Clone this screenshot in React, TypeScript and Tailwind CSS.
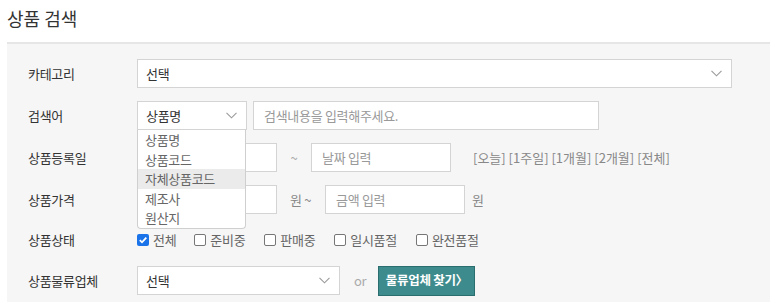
import React from "react";

const Chevron = ({ className = "" }: { className?: string }) => (
  <svg width="11" height="7" viewBox="0 0 11 7" className={className}>
    <path d="M0.5 0.8 L5.5 5.8 L10.5 0.8" fill="none" stroke="#9a9a9a" strokeWidth="1.1" />
  </svg>
);

const Select = ({ value, width }: { value: string; width: string }) => (
  <div className={`${width} h-[29px] bg-white border border-[#d4d4d4] flex items-center justify-between pl-[8px] pr-[9px] text-[#333]`}>
    <span>{value}</span>
    <Chevron />
  </div>
);

const Input = ({ placeholder, width }: { placeholder?: string; width: string }) => (
  <div className={`${width} h-[29px] bg-white border border-[#d4d4d4] flex items-center pl-[10px] text-[#999]`}>
    {placeholder}
  </div>
);

const Row = ({ label, children, h = "h-[29px]" }: { label: string; children: React.ReactNode; h?: string }) => (
  <div className={`flex items-center ${h}`}>
    <div className="w-[109px] text-[#333] shrink-0">{label}</div>
    <div className="flex items-center">{children}</div>
  </div>
);

const Check = ({ checked, label, ml }: { checked?: boolean; label: string; ml?: string }) => (
  <div className={`flex items-center ${ml ?? ""}`}>
    {checked ? (
      <div className="w-[12px] h-[12px] rounded-[2px] bg-[#1a73e8] flex items-center justify-center">
        <svg width="10" height="10" viewBox="0 0 10 10">
          <path d="M1.8 5.2 L4 7.3 L8.3 2.6" fill="none" stroke="white" strokeWidth="1.8" />
        </svg>
      </div>
    ) : (
      <div className="w-[12px] h-[12px] rounded-[2px] border border-[#767676] bg-white" />
    )}
    <span className="ml-[4px] text-[#666]">{label}</span>
  </div>
);

export default function App() {
  return (
    <div
      className="w-[777px] h-[305px] bg-white px-[7px] text-[13px] tracking-[-0.3px] overflow-hidden"
      style={{ fontFamily: '"Noto Sans CJK KR", "Noto Sans", sans-serif' }}
    >
      <div className="h-[42px] flex items-start pt-[5px] text-[18px] text-[#333] tracking-[0px]">상품 검색</div>
      <div className="bg-[#f6f6f6] border-t-[2px] border-[#e6e6e6] h-[260px] pl-[21px] pt-[15px] flex flex-col gap-[13px]">
        <Row label="카테고리">
          <Select value="선택" width="w-[595px]" />
        </Row>
        <Row label="검색어">
          <div className="relative">
            <Select value="상품명" width="w-[110px]" />
            <div className="absolute left-0 top-[29px] w-[109px] z-10 bg-white border border-t-0 border-[#cfcfcf] rounded-b-[4px] text-[#666] py-0">
              {["상품명", "상품코드", "자체상품코드", "제조사", "원산지"].map((t, i) => (
                <div key={t} className={`h-[19.6px] flex items-center pl-[7px] ${i === 2 ? "bg-[#ebebeb]" : ""}`}>
                  {t}
                </div>
              ))}
            </div>
          </div>
          <div className="ml-[6px]">
            <Input placeholder="검색내용을 입력해주세요." width="w-[346px]" />
          </div>
        </Row>
        <Row label="상품등록일">
          <Input width="w-[140px]" />
          <span className="w-[34px] text-center text-[#aaa]">~</span>
          <Input placeholder="날짜 입력" width="w-[140px]" />
          <span className="ml-[22px] text-[#888] tracking-[0px]">[오늘] [1주일] [1개월] [2개월] [전체]</span>
        </Row>
        <Row label="상품가격">
          <Input width="w-[140px]" />
          <span className="ml-[13px] w-[35px] text-[#888]">원 ~</span>
          <Input placeholder="금액 입력" width="w-[140px]" />
          <span className="ml-[7px] text-[#888]">원</span>
        </Row>
        <Row label="상품상태" h="h-[26px]">
          <Check checked label="전체" />
          <Check label="준비중" ml="ml-[18px]" />
          <Check label="판매중" ml="ml-[19px]" />
          <Check label="일시품절" ml="ml-[19px]" />
          <Check label="완전품절" ml="ml-[19px]" />
        </Row>
        <Row label="상품물류업체">
          <Select value="선택" width="w-[203px]" />
          <span className="ml-[14px] text-[#aaa]">or</span>
          <div className="ml-[12px] h-[30px] w-[97px] bg-[#3d8b8d] border border-[#2a6e70] text-white flex items-center justify-center font-bold text-[12.5px]">
            물류업체 찾기〉
          </div>
        </Row>
      </div>
    </div>
  );
}
